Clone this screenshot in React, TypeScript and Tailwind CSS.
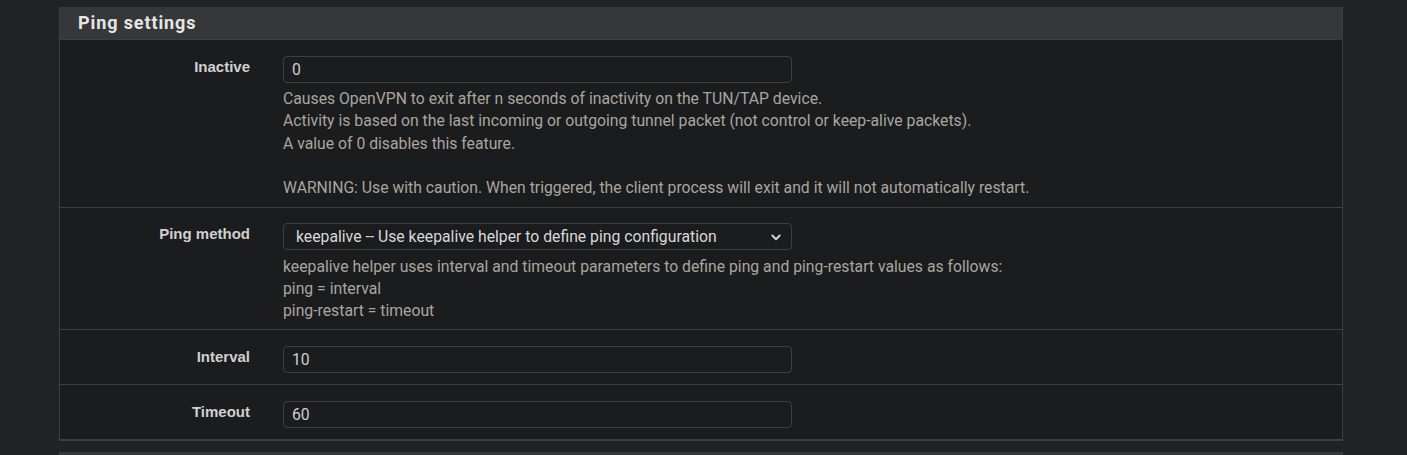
import React from "react";

const Label = ({ children }: { children: React.ReactNode }) => (
  <div className="w-[190px] shrink-0 text-right pt-[1px] text-[15px] font-bold text-[#d0d0d0] leading-[20px]" style={{ fontFamily: '"Liberation Sans", Arial, sans-serif' }}>
    {children}
  </div>
);

const Input = ({ value }: { value: string }) => (
  <div className="w-[509px] h-[27px] rounded-[4px] border border-[#3d3f42] bg-[#1b1c1e] flex items-center pl-[8px] text-[15.75px] text-[#cfcfcf]">
    {value}
  </div>
);

export default function App() {
  return (
    <div className="min-h-[455px] bg-[#212224] pt-[7px]" style={{ fontFamily: 'Roboto, "Noto Sans", sans-serif' }}>
      <div className="ml-[59px] w-[1284px] border-l border-r border-b-2 border-[#3c3e41] bg-[#1b1c1e]">
        <div className="h-[33px] bg-[#353739] border-b border-[#3c3e41] pl-[18px] flex items-center">
          <span className="text-[18px] font-bold tracking-[0.9px] text-[#e6e6e6] -mt-[2px]">Ping settings</span>
        </div>
        {/* Inactive */}
        <div className="flex pt-[16px] pb-[8px] border-b border-[#3c3e41]">
          <Label>Inactive</Label>
          <div className="pl-[33px]">
            <Input value="0" />
            <div className="mt-[5px] text-[15.75px] leading-[22.3px] text-[#aaa59f]">
              <div>Causes OpenVPN to exit after n seconds of inactivity on the TUN/TAP device.</div>
              <div>Activity is based on the last incoming or outgoing tunnel packet (not control or keep-alive packets).</div>
              <div>A value of 0 disables this feature.</div>
              <div>&nbsp;</div>
              <div>WARNING: Use with caution. When triggered, the client process will exit and it will not automatically restart.</div>
            </div>
          </div>
        </div>
        {/* Ping method */}
        <div className="flex pt-[15px] pb-[7px] border-b border-[#3c3e41]">
          <Label>Ping method</Label>
          <div className="pl-[33px]">
            <div className="w-[509px] h-[27px] rounded-[4px] border border-[#3d3f42] bg-[#1b1c1e] flex items-center justify-between pl-[12px] pr-[9px] text-[15.75px] text-[#d8d8d8]">
              <span>keepalive -- Use keepalive helper to define ping configuration</span>
              <svg width="12" height="12" viewBox="0 0 16 16" fill="none" stroke="#d8d8d8" strokeWidth="2.4" strokeLinecap="round" strokeLinejoin="round">
                <path d="M3 6l5 5 5-5" />
              </svg>
            </div>
            <div className="mt-[6px] text-[15.75px] leading-[22px] text-[#aaa59f]">
              <div>keepalive helper uses interval and timeout parameters to define ping and ping-restart values as follows:</div>
              <div>ping = interval</div>
              <div>ping-restart = timeout</div>
            </div>
          </div>
        </div>
        {/* Interval */}
        <div className="flex pt-[16px] pb-[11px] border-b border-[#3c3e41]">
          <Label>Interval</Label>
          <div className="pl-[33px]">
            <Input value="10" />
          </div>
        </div>
        {/* Timeout */}
        <div className="flex pt-[16px] pb-[11px]">
          <Label>Timeout</Label>
          <div className="pl-[33px]">
            <Input value="60" />
          </div>
        </div>
      </div>
      <div className="ml-[59px] w-[1284px] mt-[11px] h-[10px] bg-[#353739] border-l border-r border-[#3c3e41]" />
    </div>
  );
}
